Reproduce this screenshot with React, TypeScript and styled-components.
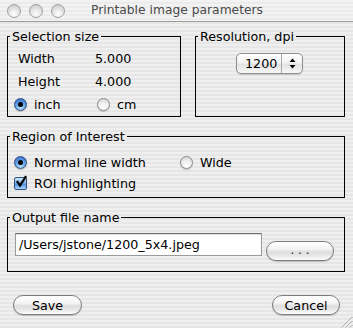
import React from 'react';
import styled, { createGlobalStyle } from 'styled-components';

const GlobalStyle = createGlobalStyle`
  html, body {
    margin: 0;
    padding: 0;
  }
  body {
    font-family: "DejaVu Sans", "Liberation Sans", sans-serif;
    color: #000;
  }
`;

const pinstripe = `repeating-linear-gradient(
  to bottom,
  #efefef 0px,
  #efefef 2px,
  #e6e6e6 2px,
  #e6e6e6 4px
)`;

const Radio = ({ checked }: { checked?: boolean }) => (
  <RadioDot $checked={checked}>{checked && <Dot />}</RadioDot>
);

const Check = () => (
  <CheckBox>
    <svg width="14" height="14" viewBox="0 0 14 14">
      <path d="M3.5 7 L6 10.5 L11.5 2" fill="none" stroke="#000" strokeWidth="2.2" strokeLinecap="square" />
    </svg>
  </CheckBox>
);

const App = () => {
  return (
    <Window>
      <GlobalStyle />
      <TitleBar>
        <Lights>
          <Light />
          <Light />
          <Light />
        </Lights>
        <Title>Printable image parameters</Title>
      </TitleBar>

      <Content>
        <TopRow>
          <Group $width={174} $height={88}>
            <Legend>Selection size</Legend>
            <SelectionBody>
              <ValueRow>
                <ValueLabel>Width</ValueLabel>
                <span>5.000</span>
              </ValueRow>
              <ValueRow>
                <ValueLabel>Height</ValueLabel>
                <span>4.000</span>
              </ValueRow>
              <OptionRow $height={23}>
                <Option $width={83}>
                  <Radio checked />
                  inch
                </Option>
                <Option>
                  <Radio />
                  cm
                </Option>
              </OptionRow>
            </SelectionBody>
          </Group>

          <Group $width={150} $height={88}>
            <Legend>Resolution, dpi</Legend>
            <ResolutionBody>
              <Popup>
                <PopupValue>1200</PopupValue>
                <PopupArrows>
                  <svg width="7" height="11" viewBox="0 0 7 11">
                    <path d="M3.5 0.5 L6.5 4 L0.5 4 Z" fill="#000" />
                    <path d="M3.5 10.5 L6.5 7 L0.5 7 Z" fill="#000" />
                  </svg>
                </PopupArrows>
              </Popup>
            </ResolutionBody>
          </Group>
        </TopRow>

        <Group $height={69}>
          <Legend>Region of Interest</Legend>
          <RoiBody>
            <OptionRow $height={21}>
              <Option $width={166}>
                <Radio checked />
                Normal line width
              </Option>
              <Option>
                <Radio />
                Wide
              </Option>
            </OptionRow>
            <OptionRow $height={21}>
              <Option>
                <Check />
                ROI highlighting
              </Option>
            </OptionRow>
          </RoiBody>
        </Group>

        <Group $height={62}>
          <Legend>Output file name</Legend>
          <OutputBody>
            <TextField>/Users/jstone/1200_5x4.jpeg</TextField>
            <BrowseButton>. . .</BrowseButton>
          </OutputBody>
        </Group>
      </Content>

      <Footer>
        <PushButton $width={69}>Save</PushButton>
        <PushButton $width={68}>Cancel</PushButton>
      </Footer>

      <Grip>
        <svg width="12" height="12" viewBox="0 0 12 12">
          <path d="M11.5 1 L1 11.5 M11.5 5 L5 11.5 M11.5 9 L9 11.5" stroke="#8a8a8a" strokeWidth="1" />
          <path d="M11.5 2 L2 11.5 M11.5 6 L6 11.5 M11.5 10 L10 11.5" stroke="#fff" strokeWidth="1" />
        </svg>
      </Grip>
    </Window>
  );
};

const Window = styled.div`
  position: relative;
  width: 353px;
  height: 328px;
  overflow: hidden;
  background: ${pinstripe};
  font-size: 12.7px;
`;

const TitleBar = styled.div`
  position: relative;
  height: 21px;
  display: flex;
  align-items: center;
  justify-content: center;

  background: repeating-linear-gradient(
    to bottom,
    #f3f3f3 0px,
    #f3f3f3 2px,
    #ebebeb 2px,
    #ebebeb 4px
  );
  border-bottom: 1px solid #9c9c9c;
`;

const Lights = styled.div`
  position: absolute;
  left: 7px;
  top: 4px;
  display: flex;
  gap: 8px;
`;

const Light = styled.span`
  width: 12px;
  height: 12px;
  border-radius: 50%;
  border: 1px solid #a0a0a0;
  background: radial-gradient(circle at 50% 75%, #ffffff 0%, #e6e6e6 45%, #c2c2c2 100%);
`;

const Title = styled.div`
  font-size: 12.3px;
  color: #4a4a4a;
  line-height: 15px;
  padding-left: 1px;
`;

const Content = styled.div`
  display: flex;
  flex-direction: column;
  gap: 12px;
  padding: 7px 8px 0 7px;
`;

const TopRow = styled.div`
  display: flex;
  justify-content: space-between;
`;

const Group = styled.fieldset<{ $width?: number; $height: number }>`
  box-sizing: border-box;
  margin: 0;
  padding: 0;
  min-width: 0;
  width: ${({ $width }) => ($width ? `${$width}px` : '100%')};
  height: ${({ $height }) => $height}px;
  border: 1px solid #000;
`;

const Legend = styled.legend`
  margin-left: 2px;
  padding: 0 2px;
  font-size: 12.7px;
  line-height: 15px;
`;

const SelectionBody = styled.div`
  padding-top: 3px;
`;

const ValueRow = styled.div`
  height: 23px;
  display: flex;
  align-items: center;
  padding-left: 10px;
`;

const ValueLabel = styled.span`
  width: 77px;
`;

const OptionRow = styled.div<{ $height: number }>`
  height: ${({ $height }) => $height}px;
  display: flex;
  align-items: center;
  padding-left: 6px;
`;

const Option = styled.label<{ $width?: number }>`
  display: flex;
  align-items: center;
  gap: 7px;
  width: ${({ $width }) => ($width ? `${$width}px` : 'auto')};
`;

const RadioDot = styled.span<{ $checked?: boolean }>`
  box-sizing: border-box;
  width: 13px;
  height: 13px;
  border-radius: 50%;
  display: flex;
  align-items: center;
  justify-content: center;
  border: 1px solid ${({ $checked }) => ($checked ? '#34517f' : '#8c8c8c')};
  background: ${({ $checked }) =>
    $checked
      ? 'radial-gradient(circle at 50% 80%, #b7e0ff 0%, #5f9de6 50%, #2a63c4 100%)'
      : 'radial-gradient(circle at 50% 80%, #ffffff 0%, #eeeeee 50%, #c8c8c8 100%)'};
  box-shadow: 0 1px 1px rgba(0, 0, 0, 0.2);
`;

const Dot = styled.span`
  width: 5px;
  height: 5px;
  border-radius: 50%;
  background: #000;
`;

const CheckBox = styled.span`
  position: relative;
  box-sizing: border-box;
  width: 13px;
  height: 13px;
  border-radius: 2px;
  border: 1px solid #34517f;
  background: linear-gradient(to bottom, #cfe8ff 0%, #6fa9ea 50%, #4f8fe0 55%, #a9d4ff 100%);

  svg {
    position: absolute;
    left: -1px;
    top: -3px;
  }
`;

const ResolutionBody = styled.div`
  display: flex;
  justify-content: center;
  padding-top: 9px;
  padding-right: 1px;
`;

const Popup = styled.div`
  box-sizing: border-box;
  width: 67px;
  height: 21px;
  display: flex;
  border: 1px solid #8e8e8e;
  border-radius: 5px;
  background: linear-gradient(to bottom, #ffffff 0%, #f3f3f3 45%, #e2e2e2 55%, #f7f7f7 100%);
  box-shadow: 0 1px 1px rgba(0, 0, 0, 0.15);
`;

const PopupValue = styled.div`
  width: 45px;
  padding-left: 8px;
  box-sizing: border-box;
  line-height: 19px;
  border-right: 1px solid #a8a8a8;
`;

const PopupArrows = styled.div`
  flex: 1;
  display: flex;
  align-items: center;
  justify-content: center;
`;

const RoiBody = styled.div`
  padding-top: 8px;
`;

const OutputBody = styled.div`
  display: flex;
  align-items: flex-start;
  padding: 8px 0 0 7px;
  gap: 4px;
`;

const TextField = styled.div`
  box-sizing: border-box;
  width: 247px;
  height: 23px;
  padding-left: 3px;
  line-height: 21px;
  background: #fff;
  border: 1px solid #9a9a9a;
  border-top-color: #6f6f6f;
  box-shadow: inset 0 1px 1px rgba(0, 0, 0, 0.15);
`;

const pillBackground = `linear-gradient(
  to bottom,
  #ffffff 0%,
  #f4f4f4 40%,
  #dedede 55%,
  #eaeaea 80%,
  #ffffff 100%
)`;

const BrowseButton = styled.div`
  box-sizing: border-box;
  width: 68px;
  height: 20px;
  margin-top: 8px;
  border: 1px solid #7c7c7c;
  border-radius: 10px;
  background: ${pillBackground};
  box-shadow: 0 1px 1px rgba(0, 0, 0, 0.2);
  text-align: center;
  line-height: 16px;
  font-size: 12px;
  color: #222;
`;

const Footer = styled.div`
  display: flex;
  justify-content: space-between;
  padding: 23px 13px 0 13px;
`;

const PushButton = styled.button<{ $width: number }>`
  box-sizing: border-box;
  width: ${({ $width }) => $width}px;
  height: 20px;
  padding: 0;
  font-family: inherit;
  font-size: 12.7px;
  color: #000;
  border: 1px solid #7c7c7c;
  border-radius: 10px;
  background: ${pillBackground};
  box-shadow: 0 1px 1px rgba(0, 0, 0, 0.2);
`;

const Grip = styled.div`
  position: absolute;
  right: 0;
  bottom: 0;
  width: 12px;
  height: 12px;
  display: flex;
`;

export default App;
